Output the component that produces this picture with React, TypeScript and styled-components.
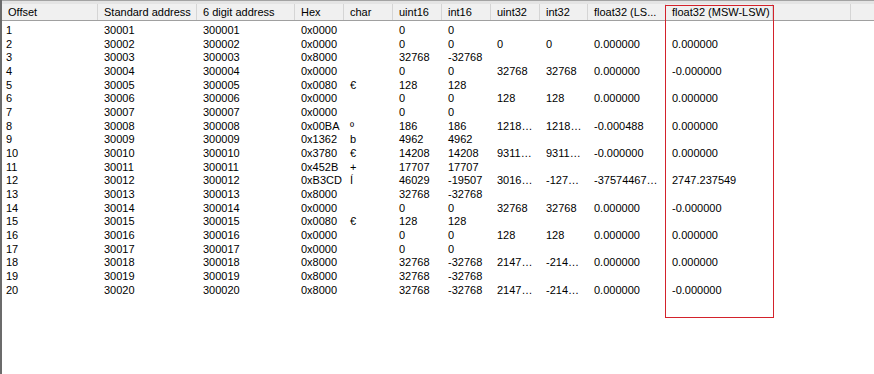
import {type FC} from 'react';
import styled, {createGlobalStyle} from 'styled-components';

const GlobalStyle = createGlobalStyle`
  html, body {
    margin: 0;
    padding: 0;
    background: #fff;
  }
  body {
    font-family: 'Liberation Sans', Arial, sans-serif;
    font-size: 11px;
    color: #000;
  }
`;

// column widths in px, the last one fills what is left
const widths = [96, 99, 98, 49, 49, 49, 49, 49, 48, 78, 107, 78];

const columns = [
  'Offset',
  'Standard address',
  '6 digit address',
  'Hex',
  'char',
  'uint16',
  'int16',
  'uint32',
  'int32',
  'float32 (LS...',
  'float32 (MSW-LSW)',
  '',
  '',
];

type Row = string[];

const rows: Row[] = [
  ['1', '30001', '300001', '0x0000', '', '0', '0', '', '', '', ''],
  ['2', '30002', '300002', '0x0000', '', '0', '0', '0', '0', '0.000000', '0.000000'],
  ['3', '30003', '300003', '0x8000', '', '32768', '-32768', '', '', '', ''],
  ['4', '30004', '300004', '0x0000', '', '0', '0', '32768', '32768', '0.000000', '-0.000000'],
  ['5', '30005', '300005', '0x0080', '€', '128', '128', '', '', '', ''],
  ['6', '30006', '300006', '0x0000', '', '0', '0', '128', '128', '0.000000', '0.000000'],
  ['7', '30007', '300007', '0x0000', '', '0', '0', '', '', '', ''],
  ['8', '30008', '300008', '0x00BA', 'º', '186', '186', '1218…', '1218…', '-0.000488', '0.000000'],
  ['9', '30009', '300009', '0x1362', 'b', '4962', '4962', '', '', '', ''],
  ['10', '30010', '300010', '0x3780', '€', '14208', '14208', '9311…', '9311…', '-0.000000', '0.000000'],
  ['11', '30011', '300011', '0x452B', '+', '17707', '17707', '', '', '', ''],
  ['12', '30012', '300012', '0xB3CD', 'Í', '46029', '-19507', '3016…', '-127…', '-37574467…', '2747.237549'],
  ['13', '30013', '300013', '0x8000', '', '32768', '-32768', '', '', '', ''],
  ['14', '30014', '300014', '0x0000', '', '0', '0', '32768', '32768', '0.000000', '-0.000000'],
  ['15', '30015', '300015', '0x0080', '€', '128', '128', '', '', '', ''],
  ['16', '30016', '300016', '0x0000', '', '0', '0', '128', '128', '0.000000', '0.000000'],
  ['17', '30017', '300017', '0x0000', '', '0', '0', '', '', '', ''],
  ['18', '30018', '300018', '0x8000', '', '32768', '-32768', '2147…', '-214…', '0.000000', '0.000000'],
  ['19', '30019', '300019', '0x8000', '', '32768', '-32768', '', '', '', ''],
  ['20', '30020', '300020', '0x8000', '', '32768', '-32768', '2147…', '-214…', '0.000000', '-0.000000'],
];

const template = `${widths.map(w => `${w}px`).join(' ')} 1fr`;

const Window = styled.div`
  position: relative;
  width: 874px;
  height: 374px;
  box-sizing: border-box;
  border-left: 2px solid #6b6b6b;
  background: #fff;
  overflow: hidden;
`;

const TopStrip = styled.div`
  height: 4px;
  box-sizing: border-box;
  border-top: 1px solid #a3a3a3;
  background: #e4e4e4;
`;

const HeaderRow = styled.div`
  display: grid;
  grid-template-columns: ${template};
  height: 16px;
  background: #f0f0f0;
  border-bottom: 1px solid #a0a0a0;
`;

const HeaderCell = styled.div<{$last?: boolean}>`
  display: flex;
  align-items: center;
  padding-left: 6px;
  border-right: ${p => (p.$last ? 'none' : '1px solid #d5d5d5')};
  white-space: nowrap;
  overflow: hidden;
  line-height: 16px;
`;

const Body = styled.div`
  padding-top: 3px;
`;

const DataRow = styled.div`
  display: grid;
  grid-template-columns: ${template};
  height: 13.68px;
  line-height: 13.68px;
`;

const Cell = styled.div`
  padding-left: 6px;
  white-space: nowrap;
  overflow: hidden;
`;

const FirstCell = styled(Cell)`
  padding-left: 4px;
`;

// annotation frame drawn over the MSW-LSW column
const Highlight = styled.div`
  position: absolute;
  left: 663px;
  top: 5px;
  width: 109px;
  height: 313px;
  box-sizing: border-box;
  border: 1px solid #d3222b;
  pointer-events: none;
`;

const App: FC = () => (
  <>
    <GlobalStyle />
    <Window>
      <TopStrip />
      <HeaderRow>
        {columns.map((label, i) => (
          <HeaderCell key={i} $last={i === columns.length - 1}>
            {label}
          </HeaderCell>
        ))}
      </HeaderRow>
      <Body>
        {rows.map(row => (
          <DataRow key={row[0]}>
            {row.map((value, i) =>
              i === 0 ? (
                <FirstCell key={i}>{value}</FirstCell>
              ) : (
                <Cell key={i}>{value}</Cell>
              ),
            )}
          </DataRow>
        ))}
      </Body>
      <Highlight />
    </Window>
  </>
);

export default App;
